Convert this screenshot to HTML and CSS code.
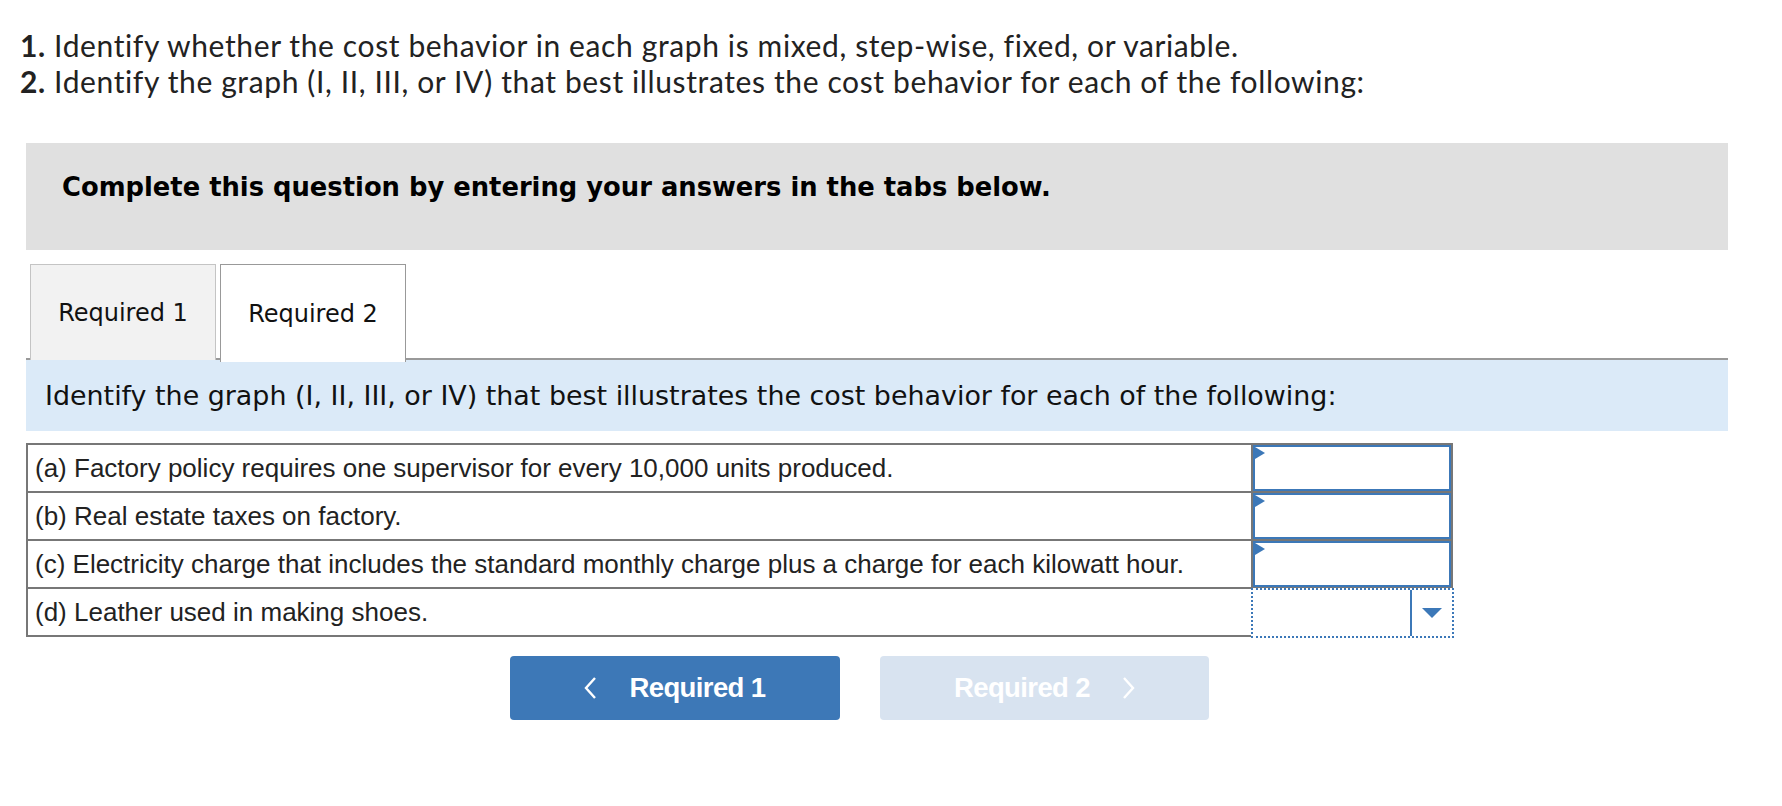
FILE: index.html
```html
<!DOCTYPE html>
<html>
<head>
<meta charset="utf-8">
<link rel="stylesheet" href="styles.css">
</head>
<body>
<div class="page">
  <div class="intro">
    <p><b>1.</b> Identify whether the cost behavior in each graph is mixed, step-wise, fixed, or variable.</p>
    <p><b>2.</b> Identify the graph (I, II, III, or IV) that best illustrates the cost behavior for each of the following:</p>
  </div>

  <div class="notice">Complete this question by entering your answers in the tabs below.</div>

  <div class="tabs">
    <div class="tab">Required 1</div>
    <div class="tab active">Required 2</div>
  </div>

  <div class="instruction">Identify the graph (I, II, III, or IV) that best illustrates the cost behavior for each of the following:</div>

  <table class="answers">
    <colgroup><col class="c-label"><col class="c-input"></colgroup>
    <tr>
      <td class="label">(a) Factory policy requires one supervisor for every 10,000 units produced.</td>
      <td class="input"><div class="box"><span class="flag"></span></div></td>
    </tr>
    <tr>
      <td class="label">(b) Real estate taxes on factory.</td>
      <td class="input"><div class="box"><span class="flag"></span></div></td>
    </tr>
    <tr>
      <td class="label">(c) Electricity charge that includes the standard monthly charge plus a charge for each kilowatt hour.</td>
      <td class="input"><div class="box"><span class="flag"></span></div></td>
    </tr>
    <tr>
      <td class="label">(d) Leather used in making shoes.</td>
      <td class="input select-cell"><div class="select"><div class="select-value"></div><div class="select-arrow"><svg width="20" height="11" viewBox="0 0 20 11"><polygon points="0,0 20,0 10,10" fill="#3c78b8"/></svg></div></div></td>
    </tr>
  </table>

  <div class="nav">
    <button class="btn prev"><svg class="chev" width="13" height="22" viewBox="0 0 13 22"><polyline points="11,1 2,11 11,21" fill="none" stroke="#fff" stroke-width="2.4"/></svg><span>Required 1</span></button>
    <button class="btn next"><span>Required 2</span><svg class="chev" width="13" height="22" viewBox="0 0 13 22"><polyline points="2,1 11,11 2,21" fill="none" stroke="#fff" stroke-width="2.4"/></svg></button>
  </div>
</div>
</body>
</html>
```
FILE: styles.css
```css
html, body {
  margin: 0;
  padding: 0;
  background: #fff;
}

.page {
  width: 1782px;
}

.intro {
  padding: 27px 0 0 20px;
  font-family: Lato, "Open Sans", sans-serif;
  font-size: 30px;
  letter-spacing: 0.62px;
  color: #222;
}

.intro p {
  margin: 0;
  line-height: 36px;
}

.intro b {
  font-weight: 700;
}

.notice {
  margin: 44px 0 0 26px;
  width: 1702px;
  height: 107px;
  box-sizing: border-box;
  background: #e0e0e0;
  padding: 29px 0 0 36px;
  font-family: "DejaVu Sans", Verdana, sans-serif;
  font-weight: bold;
  font-size: 25.8px;
  line-height: 30px;
  color: #000;
}

.tabs {
  margin: 14px 0 0 26px;
  width: 1702px;
  box-sizing: border-box;
  padding-left: 4px;
  display: flex;
  gap: 4px;
  border-bottom: 2px solid #999;
  height: 96px;
}

.tab {
  width: 186px;
  height: 96px;
  box-sizing: border-box;
  background: #f2f2f2;
  border: 1px solid #c4c4c4;
  border-bottom: none;
  display: flex;
  align-items: center;
  justify-content: center;
  font-family: "DejaVu Sans", Verdana, sans-serif;
  font-size: 24px;
  color: #111;
}

.tab.active {
  background: #fff;
  border-color: #999;
  height: 98px;
  position: relative;
  z-index: 1;
}

.instruction {
  margin-left: 26px;
  width: 1702px;
  height: 71px;
  box-sizing: border-box;
  background: #dbeaf8;
  padding-left: 19px;
  display: flex;
  align-items: center;
  font-family: "DejaVu Sans", Verdana, sans-serif;
  font-size: 26.9px;
  color: #111;
}

.answers {
  margin: 12px 0 0 26px;
  border-collapse: collapse;
  width: 1425px;
  table-layout: fixed;
}

.c-label {
  width: 1225px;
}

.c-input {
  width: 200px;
}

.answers td {
  border: 2px solid #777;
  height: 46px;
  padding: 0;
}

.answers .label {
  padding-left: 7px;
  font-family: "Liberation Sans", Arial, sans-serif;
  font-size: 26px;
  color: #222;
  white-space: nowrap;
}

.answers .input {
  padding: 0;
  vertical-align: top;
}

.box {
  position: relative;
  height: 46px;
  box-sizing: border-box;
  border: 2px solid #3c78b8;
}

.flag {
  position: absolute;
  left: 0;
  top: 0;
  width: 0;
  height: 0;
  border-top: 6px solid transparent;
  border-bottom: 6px solid transparent;
  border-left: 10px solid #3c78b8;
}

.answers .select-cell {
  border: none;
  position: relative;
}

.select {
  position: absolute;
  left: -2px;
  top: -1px;
  right: -2px;
  bottom: -2px;
  border: 2px dotted #3c78b8;
  display: flex;
  background: #fff;
}

.select-value {
  flex: 1;
  border-right: 2px solid #3c78b8;
}

.select-arrow {
  width: 40px;
  display: flex;
  align-items: center;
  justify-content: center;
}

.nav {
  display: flex;
  gap: 40px;
  margin: 19px 0 0 510px;
}

.btn {
  width: 330px;
  height: 64px;
  border: none;
  border-radius: 4px;
  display: flex;
  align-items: center;
  justify-content: center;
  gap: 32px;
  font-family: "Liberation Sans", Arial, sans-serif;
  font-weight: bold;
  font-size: 27.5px;
  color: #fff;
  letter-spacing: -0.6px;
  padding: 0;
}

.btn.prev {
  background: #3d78b7;
}

.btn.next {
  width: 329px;
  background: #d8e3f0;
}

.chev {
  display: block;
}
```
